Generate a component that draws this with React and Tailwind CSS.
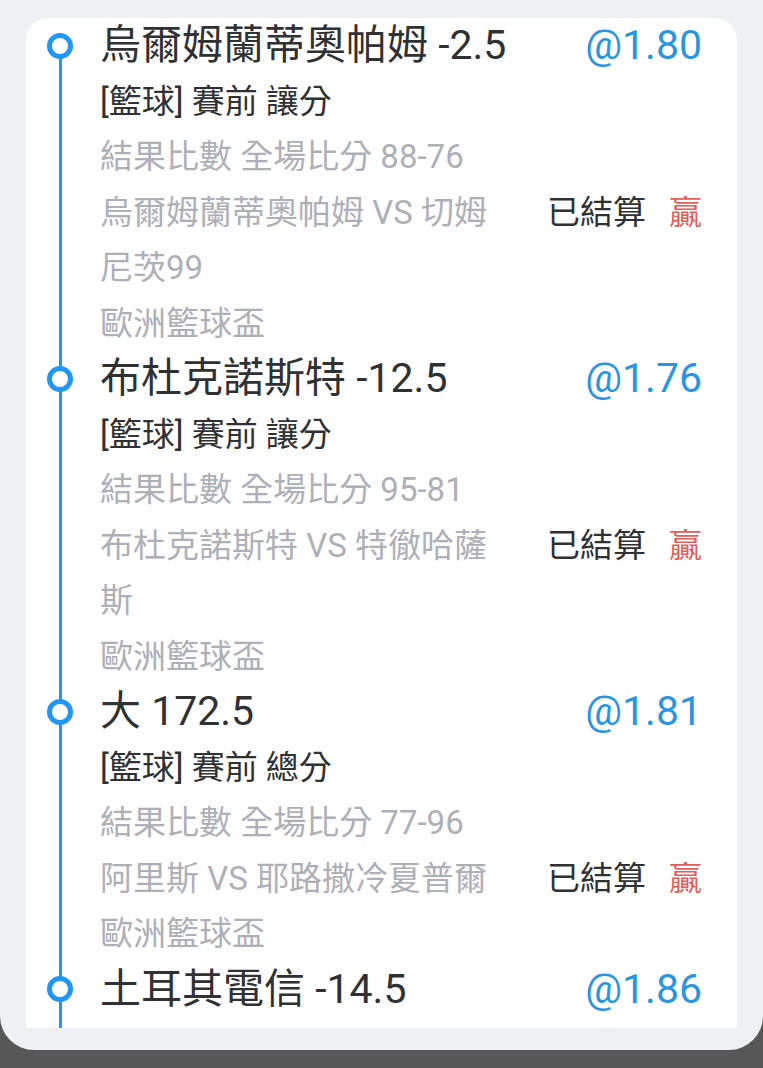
import React from "react";

const bets = [
  {
    title: "烏爾姆蘭蒂奧帕姆 -2.5",
    odds: "@1.80",
    sub: "[籃球] 賽前 讓分",
    score: "結果比數 全場比分 88-76",
    teams: ["烏爾姆蘭蒂奧帕姆 VS 切姆", "尼茨99"],
    league: "歐洲籃球盃",
  },
  {
    title: "布杜克諾斯特 -12.5",
    odds: "@1.76",
    sub: "[籃球] 賽前 讓分",
    score: "結果比數 全場比分 95-81",
    teams: ["布杜克諾斯特 VS 特徹哈薩", "斯"],
    league: "歐洲籃球盃",
  },
  {
    title: "大 172.5",
    odds: "@1.81",
    sub: "[籃球] 賽前 總分",
    score: "結果比數 全場比分 77-96",
    teams: ["阿里斯 VS 耶路撒冷夏普爾"],
    league: "歐洲籃球盃",
  },
];

const font = { fontFamily: 'Roboto, "Noto Sans CJK TC", sans-serif' };

function Dot() {
  return (
    <div className="absolute left-[-53px] top-1/2 -translate-y-1/2 w-[26px] h-[26px] rounded-full border-[5px] border-[#2196f3] bg-white" />
  );
}

function TitleRow({ title, odds }) {
  return (
    <div className="relative flex items-center justify-between h-[55.5px]">
      <Dot />
      <span className="text-[41px] text-[#303133] leading-none">{title}</span>
      <span className="text-[41px] text-[#2b95e0] leading-none">{odds}</span>
    </div>
  );
}

function Bet({ b }) {
  return (
    <div className="flex flex-col">
      <TitleRow title={b.title} odds={b.odds} />
      <div className="flex items-center h-[55.5px] text-[33px] text-[#303133] leading-none">{b.sub}</div>
      <div className="flex items-center h-[55.5px] text-[33px] text-[#aeb0b8] leading-none">{b.score}</div>
      <div className="flex justify-between">
        <div className="flex flex-col">
          {b.teams.map((t, i) => (
            <div key={i} className="flex items-center h-[55.5px] text-[33px] text-[#aeb0b8] leading-none whitespace-nowrap">
              {t}
            </div>
          ))}
        </div>
        <div className="flex items-center h-[55.5px] gap-[23px] text-[33px] leading-none">
          <span className="text-[#303133]">已結算</span>
          <span className="text-[#e0605c]">贏</span>
        </div>
      </div>
      <div className="flex items-center h-[55.5px] text-[33px] text-[#aeb0b8] leading-none">{b.league}</div>
    </div>
  );
}

export default function App() {
  return (
    <div className="w-[763px] h-[1068px] bg-[#575757] overflow-hidden" style={font}>
      <div className="h-[1050px] bg-[#eef0f4] rounded-b-[34px] pt-[18px] px-[26px]">
        <div className="relative h-[1010px] bg-white rounded-t-[22px] overflow-hidden pl-[74px] pr-[35px]">
          <div className="absolute left-[33px] top-[40px] bottom-0 w-[3px] bg-[#2196f3]" />
          <div className="relative flex flex-col">
            {bets.map((b, i) => (
              <Bet key={i} b={b} />
            ))}
            <TitleRow title="土耳其電信 -14.5" odds="@1.86" />
          </div>
        </div>
      </div>
    </div>
  );
}
